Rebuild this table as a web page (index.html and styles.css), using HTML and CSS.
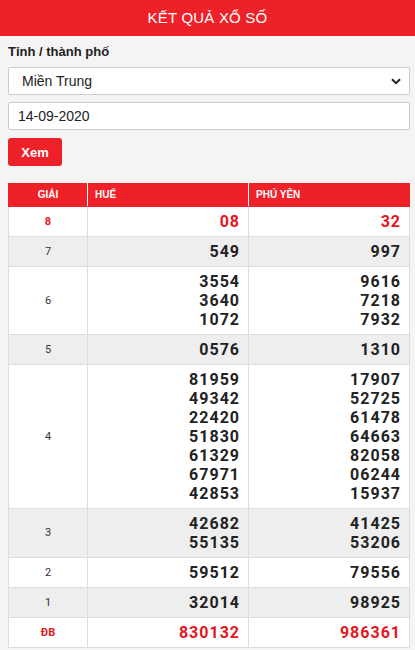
FILE: index.html
```html
<!DOCTYPE html>
<html lang="vi">
<head>
<meta charset="utf-8">
<title>Kết quả xổ số</title>
<link rel="stylesheet" href="styles.css">
</head>
<body>
<header class="topbar">KẾT QUẢ XỔ SỐ</header>
<main class="content">
  <form class="filter">
    <label class="label">Tỉnh / thành phố</label>
    <div class="select">
      <span>Miền Trung</span>
      <svg class="chev" width="10" height="7" viewBox="0 0 10 7"><path d="M1 1.2 L5 5.2 L9 1.2" fill="none" stroke="#222" stroke-width="2"/></svg>
    </div>
    <div class="input">14-09-2020</div>
    <div><button type="button" class="btn">Xem</button></div>
  </form>

  <table class="results">
    <thead>
      <tr><th class="c-prize">GIẢI</th><th>HUẾ</th><th>PHÚ YÊN</th></tr>
    </thead>
    <tbody>
      <tr class="hot"><td class="c-prize">8</td><td>08</td><td>32</td></tr>
      <tr class="alt"><td class="c-prize">7</td><td>549</td><td>997</td></tr>
      <tr><td class="c-prize">6</td><td>3554<br>3640<br>1072</td><td>9616<br>7218<br>7932</td></tr>
      <tr class="alt"><td class="c-prize">5</td><td>0576</td><td>1310</td></tr>
      <tr><td class="c-prize">4</td><td>81959<br>49342<br>22420<br>51830<br>61329<br>67971<br>42853</td><td>17907<br>52725<br>61478<br>64663<br>82058<br>06244<br>15937</td></tr>
      <tr class="alt"><td class="c-prize">3</td><td>42682<br>55135</td><td>41425<br>53206</td></tr>
      <tr><td class="c-prize">2</td><td>59512</td><td>79556</td></tr>
      <tr class="alt"><td class="c-prize">1</td><td>32014</td><td>98925</td></tr>
      <tr class="hot"><td class="c-prize">ĐB</td><td>830132</td><td>986361</td></tr>
    </tbody>
  </table>
</main>
</body>
</html>
```
FILE: styles.css
```css
* { box-sizing: border-box; }
html, body { margin: 0; padding: 0; }
body {
  background: #f4f4f4;
  font-family: "Liberation Sans", Arial, sans-serif;
  color: #222;
  width: 415px;
}
.topbar {
  background: #ee2128;
  color: #fff;
  height: 36px;
  line-height: 36px;
  text-align: center;
  font-size: 15px;
  letter-spacing: 0.2px;
}
.content {
  padding: 8px 5px 0 8px;
}
.filter {
  display: flex;
  flex-direction: column;
  margin: 0;
}
.label {
  font-weight: bold;
  font-size: 13px;
  line-height: 16px;
  margin-top: 0;
  color: #222;
}
.select, .input {
  background: #fff;
  border: 1px solid #ccc;
  border-radius: 2px;
  height: 28px;
  display: flex;
  align-items: center;
  font-size: 14px;
  color: #222;
}
.select {
  margin-top: 7px;
  padding: 0 8px 0 13px;
  justify-content: space-between;
}
.input {
  margin-top: 7px;
  padding: 0 9px;
}
.btn {
  margin-top: 8px;
  background: #ee2128;
  color: #fff;
  border: 0;
  border-radius: 3px;
  height: 28px;
  width: 54px;
  font-family: "Liberation Sans", Arial, sans-serif;
  font-weight: bold;
  font-size: 13px;
  padding: 0;
}
.results {
  margin-top: 17px;
  width: 402px;
  border-collapse: collapse;
  table-layout: fixed;
  background: #fff;
}
.results th, .results td {
  border: 1px solid #ddd;
}
.results th {
  background: #ee2128;
  color: #fff;
  font-size: 10px;
  font-weight: bold;
  text-align: left;
  height: 23px;
  padding: 0 7px;
  border-color: #ee2128 #fff;
  border-top: 0;
}
.results th:first-child { border-left-color: #ee2128; }
.results th:last-child { border-right-color: #ee2128; }
.results th.c-prize { text-align: center; width: 79px; }
.results th:nth-child(2) { width: 161px; }
.results td {
  text-align: right;
  font-family: Roboto, "Liberation Sans", sans-serif;
  font-weight: bold;
  font-size: 16px;
  letter-spacing: 1px;
  line-height: 19px;
  padding: 5px 8px 5px 8px;
  color: #222;
}
.results td.c-prize {
  text-align: center;
  font-family: Roboto, "Liberation Sans", sans-serif;
  font-weight: normal;
  font-size: 11px;
  letter-spacing: 0;
  color: #333;
}
.results tr.alt td { background: #eee; }
.results tr.hot td { color: #e5161c; }
.results tr.hot td.c-prize { font-weight: bold; color: #e5161c; }
```
